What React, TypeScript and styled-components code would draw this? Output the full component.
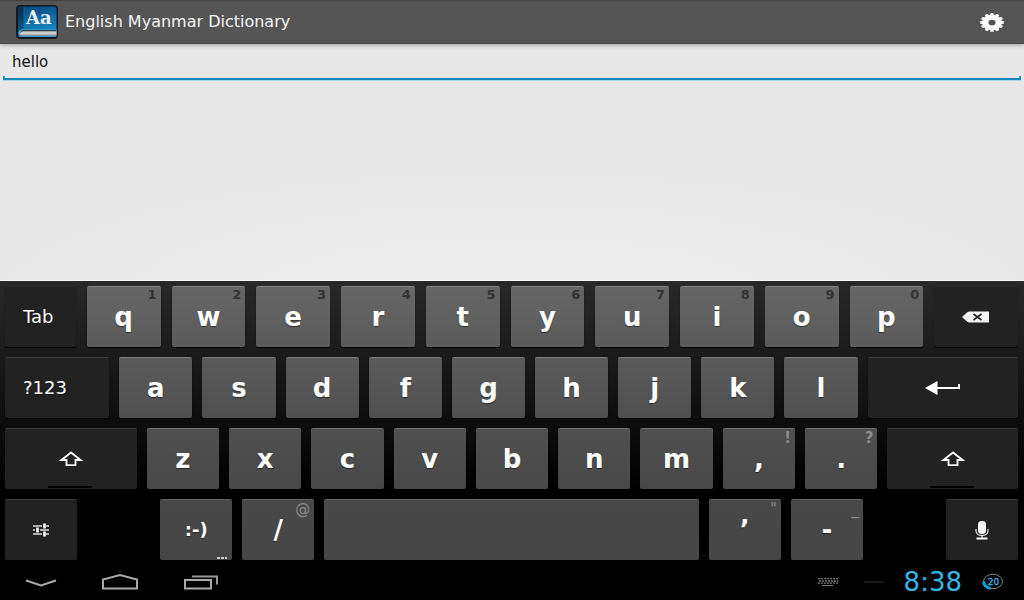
import React from "react";
import styled, { createGlobalStyle, css } from "styled-components";

const Global = createGlobalStyle`
  *, *::before, *::after { box-sizing: border-box; }
  html, body, #root { height: 100%; margin: 0; }
  body { background: #000; }
  body, button, input { font-family: "DejaVu Sans", Verdana, sans-serif; }
`;

const Screen = styled.div`
  display: flex;
  flex-direction: column;
  min-height: 100%;
`;

const ActionBar = styled.header`
  display: flex;
  align-items: center;
  gap: 7px;
  height: 44px;
  padding: 0 20px 0 16px;
  background: #555;
  border-top: 1px solid #444;
  border-bottom: 1px solid #4c4c4c;
  box-shadow: 0 1px 4px rgba(0, 0, 0, 0.3);
  z-index: 1;
`;

const Title = styled.h1`
  flex: 1;
  margin: 0;
  font-size: 16px;
  line-height: 20px;
  font-weight: 400;
  color: #f3f3f3;
`;

const PlainButton = styled.button`
  display: flex;
  align-items: center;
  justify-content: center;
  padding: 0;
  border: 0;
  background: none;
  cursor: pointer;
`;

const Content = styled.main`
  flex: 1;
  padding: 8px 3px 0;
  background: radial-gradient(ellipse 55% 60% at 50% 110%, #efefef, #e7e7e7);
  border-bottom: 1px solid #fafafa;
`;

const Field = styled.div`
  position: relative;
  border-bottom: 2px solid #1188b8;
  box-shadow: 0 1px 0 #a8d8ea;

  &::before,
  &::after {
    content: "";
    position: absolute;
    bottom: 0;
    width: 2px;
    height: 2px;
    background: #2a9fcc;
  }
  &::before { left: 0; }
  &::after { right: 0; }
`;

const SearchInput = styled.input`
  display: block;
  width: 100%;
  height: 26px;
  padding: 0 9px 6px;
  border: 0;
  outline: 0;
  background: transparent;
  font-size: 15px;
  line-height: 20px;
  color: #111;
`;

const Keyboard = styled.section`
  display: flex;
  flex-direction: column;
  gap: 10px;
  padding: 5px 6px 4px 5px;
  background: linear-gradient(#292929, #000 75%);
`;

const Row = styled.div<{ $gap: number }>`
  display: flex;
  gap: ${(p) => p.$gap}px;
`;

const Spacer = styled.span<{ $w: number }>`
  flex: ${(p) => p.$w} 1 0;
`;

const letterTones = [
  ["#666", "#5b5b5b", "#858585"],
  ["#5b5b5b", "#505050", "#7c7c7c"],
  ["#505050", "#484848", "#707070"],
  ["#484848", "#464646", "#646464"],
];

const Key = styled.button<{ $w: number; $tone: number; $kind: Kind }>`
  position: relative;
  flex: ${(p) => p.$w} 1 0;
  min-width: 0;
  display: flex;
  align-items: center;
  justify-content: center;
  height: 61px;
  padding: 0;
  border: 0;
  border-radius: 2px;
  color: #fff;
  cursor: pointer;
  text-shadow: 0 1px 1px rgba(0, 0, 0, 0.5);
  box-shadow: 0 1px 1px #000;

  ${(p) =>
    p.$kind === "letter" || p.$kind === "smiley"
      ? css`
          background: linear-gradient(${letterTones[p.$tone][0]}, ${letterTones[p.$tone][1]});
          border-top: 1px solid ${letterTones[p.$tone][2]};
          font-weight: 700;
          font-size: 26px;
          line-height: 30px;
        `
      : css`
          background: #222;
          border-top: 1px solid ${p.$tone === 0 ? "#303030" : "#3c3c3c"};
          font-size: 18px;
          line-height: 20px;
        `}
  ${(p) => p.$kind === "smiley" && css`font-size: 18px;`}
`;

const TextLabel = styled.span`
  flex: 1;
  margin-left: 18px;
  text-align: left;
`;

const Hint = styled.span<{ $tone: number }>`
  position: absolute;
  top: 1px;
  right: 4px;
  font-size: ${(p) => (p.$tone === 0 ? 13 : 15)}px;
  line-height: ${(p) => (p.$tone === 0 ? 14 : 16)}px;
  font-weight: ${(p) => (p.$tone === 3 ? 400 : 700)};
  text-shadow: none;
  color: ${(p) => (p.$tone === 0 ? "#333" : "#8c8c8c")};
`;

const More = styled.span`
  position: absolute;
  right: 5px;
  bottom: 1px;
  width: 10px;
  height: 2px;
  background: repeating-linear-gradient(90deg, #ccc 0 3px, transparent 3px 4px);
`;

const LockMark = styled.span`
  position: absolute;
  bottom: 1px;
  left: 33%;
  width: 33%;
  height: 2px;
  background: #000;
`;

const SystemBar = styled.footer`
  display: flex;
  align-items: center;
  justify-content: space-between;
  height: 36px;
  padding: 0 20px 0 24px;
  background: #000;
`;

const NavGroup = styled.nav`
  display: flex;
  align-items: center;
  gap: 44px;
`;

const StatusGroup = styled.div`
  display: flex;
  align-items: center;
`;

const Dash = styled.span`
  width: 20px;
  height: 2px;
  margin: 0 20px 0 26px;
  background: #151919;
`;

const Clock = styled.time`
  margin-right: 20px;
  font-size: 26px;
  line-height: 30px;
  color: #33b5e5;
`;

const LogoIcon = () => (
  <svg width="42" height="34" viewBox="0 0 42 34" aria-hidden="true">
    <defs>
      <linearGradient id="cover" x1="0.2" y1="0" x2="0.5" y2="1">
        <stop offset="0" stopColor="#07497d" />
        <stop offset="1" stopColor="#1c8ecb" />
      </linearGradient>
      <linearGradient id="spine" x1="0" y1="0" x2="0" y2="1">
        <stop offset="0" stopColor="#06304f" />
        <stop offset="1" stopColor="#0d5a8c" />
      </linearGradient>
      <linearGradient id="pages" x1="0" y1="0" x2="0" y2="1">
        <stop offset="0" stopColor="#6f7377" />
        <stop offset="0.500" stopColor="#dcdcdc" />
        <stop offset="1" stopColor="#94847c" />
      </linearGradient>
    </defs>
    <rect x="0" y="0" width="42" height="34" rx="4" fill="#16181b" />
    <rect x="2" y="1.500" width="38.500" height="30.500" rx="2.500" fill="url(#cover)" />
    <path d="M2 4Q2 1.500 4.500 1.500H8V24.500Q3 24.500 2 28Z" fill="url(#spine)" />
    <path d="M8 2V24.500" stroke="#2379ae" strokeWidth="0.800" />
    <path d="M40.500 24.800H7Q3 24.800 3 28T7 31.200H40.500" fill="url(#pages)" stroke="#2aa0da" strokeWidth="1" />
    <path d="M40 25.600H8Q5 25.600 4.500 27.500" fill="none" stroke="#123" strokeWidth="0.800" />
    <text x="10" y="19" fontFamily="DejaVu Serif, serif" fontWeight="700" fontSize="18" fill="#e6f1f8">Aa</text>
  </svg>
);

const GearIcon = () => {
  const teeth = Array.from({ length: 12 }, (_, i) => i * 30);
  return (
    <svg width="24" height="19" viewBox="-12 -12 24 24" preserveAspectRatio="none" aria-hidden="true">
      <g fill="#fff">
        {teeth.map((a) => (
          <rect key={a} x="-1.800" y="-11.800" width="3.600" height="5" rx="0.800" transform={`rotate(${a})`} />
        ))}
      </g>
      <circle r="6.700" fill="none" stroke="#fff" strokeWidth="6.200" />
    </svg>
  );
};

const DeleteIcon = () => (
  <svg width="28" height="12" viewBox="0 0 28 12" aria-hidden="true">
    <path d="M0 6 5 1.500Q6 .500 7.500 .500H27V11.500H7.500Q6 11.500 5 10.500Z" fill="#f2f2f2" />
    <path d="M11.500 3 19.500 9M19.500 3 11.500 9" stroke="#222" strokeWidth="1.600" />
  </svg>
);

const EnterIcon = () => (
  <svg width="36" height="16" viewBox="0 0 36 16" aria-hidden="true">
    <path d="M0 8 12.500 1V15Z" fill="#fff" />
    <path d="M12 8H34V4" fill="none" stroke="#fff" strokeWidth="2" />
  </svg>
);

const ShiftIcon = () => (
  <svg width="24" height="16" viewBox="0 0 24 16" aria-hidden="true">
    <path d="M12 1.500 2.500 9H7.500V14.200H16.500V9H21.500Z" fill="none" stroke="#fff" strokeWidth="1.800" />
  </svg>
);

const SettingsIcon = () => (
  <svg width="16" height="14" viewBox="0 0 16 14" aria-hidden="true">
    <path d="M0 3H9M13 3H16M0 7H2M7 7H16M0 11H9M13 11H16" stroke="#ddd" strokeWidth="1.400" />
    <path d="M11.500 .500V5.500M4.500 4.500V9.500M11.500 8.500V13.500" stroke="#fff" strokeWidth="2.600" />
  </svg>
);

const MicIcon = () => (
  <svg width="14" height="19" viewBox="0 0 14 19" aria-hidden="true">
    <rect x="3" y="0" width="8" height="13" rx="3.500" fill="#f5f5f5" />
    <path d="M1 8V10Q1.500 14.500 7 14.500T13 10V8M7 14.500V17" fill="none" stroke="#ddd" strokeWidth="1.300" />
    <path d="M1.500 17.500H12.500" stroke="#fff" strokeWidth="2" />
  </svg>
);

const HideIcon = () => (
  <svg width="34" height="18" viewBox="0 0 34 18" aria-hidden="true">
    <path d="M2 7.500 17 12.500 32 7.500" fill="none" stroke="#aaa" strokeWidth="2" />
  </svg>
);

const HomeIcon = () => (
  <svg width="36" height="18" viewBox="0 0 36 18" aria-hidden="true">
    <path d="M1 15.500V6.500L18 2 35 6.500V15.500Z" fill="none" stroke="#aaa" strokeWidth="2" />
  </svg>
);

const RecentsIcon = () => (
  <svg width="36" height="18" viewBox="0 0 36 18" aria-hidden="true">
    <path d="M3 7H29V15.500H3Z" fill="none" stroke="#aaa" strokeWidth="2" />
    <path d="M10 3.500H35V11.500" fill="none" stroke="#999" strokeWidth="2" />
  </svg>
);

const ImeIcon = () => (
  <svg width="20" height="8" viewBox="0 0 20 8" aria-hidden="true">
    <path d="M0 .700H20M1 3H20M0 5.200H20" stroke="#777" strokeWidth="1.300" strokeDasharray="2 1" />
    <path d="M4 7.500H15" stroke="#777" strokeWidth="1" />
  </svg>
);

const BatteryIcon = () => (
  <svg width="22" height="18" viewBox="0 0 22 18" role="img" aria-label="Battery 20 percent">
    <ellipse cx="11" cy="8.500" rx="9.500" ry="7.200" fill="none" stroke="#888" strokeWidth="1" />
    <path d="M1.500 8.500Q2.200 14 8.500 15.500" fill="none" stroke="#0fa0dc" strokeWidth="3" />
    <text x="11.500" y="12" textAnchor="middle" fontFamily="DejaVu Sans, sans-serif" fontSize="9" fill="#33b5e5" stroke="#33b5e5" strokeWidth="0.300">20</text>
  </svg>
);

type Kind = "letter" | "smiley" | "text" | "icon";
type KeyDef = {
  w: number;
  label?: string;
  name?: string;
  hint?: string;
  kind?: Kind;
  icon?: React.ReactNode;
  lock?: boolean;
  more?: boolean;
  blank?: boolean;
};

const letters = (s: string, w: number, hints = ""): KeyDef[] =>
  s.split("").map((label, i) => ({ w, label, hint: hints[i] }));

const rows: { gap: number; keys: KeyDef[] }[] = [
  {
    gap: 11,
    keys: [
      { w: 71, label: "Tab", kind: "text" },
      ...letters("qwertyuiop", 74, "1234567890"),
      { w: 84, name: "Delete", kind: "icon", icon: <DeleteIcon /> },
    ],
  },
  {
    gap: 10,
    keys: [
      { w: 104, label: "?123", kind: "text" },
      ...letters("asdfghjkl", 73),
      { w: 150, name: "Enter", kind: "icon", icon: <EnterIcon /> },
    ],
  },
  {
    gap: 10,
    keys: [
      { w: 131, name: "Left shift", kind: "icon", icon: <ShiftIcon />, lock: true },
      ...letters("zxcvbnm", 72),
      { w: 72, label: ",", hint: "!" },
      { w: 72, label: ".", hint: "?" },
      { w: 130, name: "Right shift", kind: "icon", icon: <ShiftIcon />, lock: true },
    ],
  },
  {
    gap: 10,
    keys: [
      { w: 72, name: "Keyboard settings", kind: "icon", icon: <SettingsIcon /> },
      { w: 63, blank: true },
      { w: 72, label: ":-)", kind: "smiley", more: true },
      { w: 72, label: "/", hint: "@" },
      { w: 374, name: "Space" },
      { w: 72, label: "’", hint: '"' },
      { w: 72, label: "-", hint: "_" },
      { w: 63, blank: true },
      { w: 72, name: "Voice input", kind: "icon", icon: <MicIcon /> },
    ],
  },
];

export default function App() {
  return (
    <>
      <Global />
      <Screen>
        <ActionBar>
          <LogoIcon />
          <Title>English Myanmar Dictionary</Title>
          <PlainButton aria-label="Settings">
            <GearIcon />
          </PlainButton>
        </ActionBar>
        <Content>
          <Field>
            <SearchInput aria-label="Search word" defaultValue="hello" />
          </Field>
        </Content>
        <Keyboard aria-label="Keyboard">
          {rows.map((row, r) => (
            <Row key={r} $gap={row.gap}>
              {row.keys.map((k, i) =>
                k.blank ? (
                  <Spacer key={i} $w={k.w} />
                ) : (
                  <Key key={i} $w={k.w} $tone={r} $kind={k.kind ?? "letter"} aria-label={k.name}>
                    {k.icon}
                    {k.kind === "text" ? <TextLabel>{k.label}</TextLabel> : k.label}
                    {k.hint && <Hint $tone={r}>{k.hint}</Hint>}
                    {k.more && <More />}
                    {k.lock && <LockMark />}
                  </Key>
                )
              )}
            </Row>
          ))}
        </Keyboard>
        <SystemBar>
          <NavGroup aria-label="System navigation">
            <PlainButton aria-label="Hide keyboard"><HideIcon /></PlainButton>
            <PlainButton aria-label="Home"><HomeIcon /></PlainButton>
            <PlainButton aria-label="Recent apps"><RecentsIcon /></PlainButton>
          </NavGroup>
          <StatusGroup>
            <ImeIcon />
            <Dash />
            <Clock>8:38</Clock>
            <BatteryIcon />
          </StatusGroup>
        </SystemBar>
      </Screen>
    </>
  );
}
